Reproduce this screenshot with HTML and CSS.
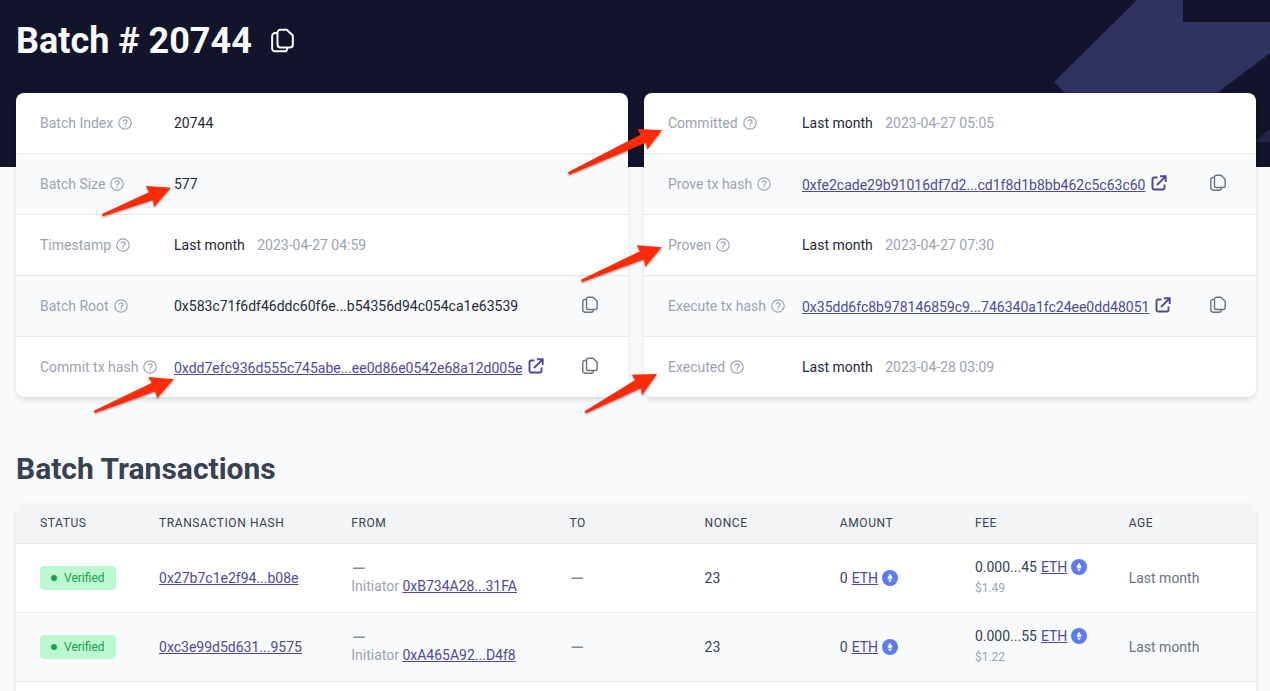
FILE: index.html
```html
<!DOCTYPE html>
<html lang="en">
<head>
<meta charset="utf-8">
<meta name="viewport" content="width=device-width, initial-scale=1">
<title>Batch # 20744</title>
<link rel="stylesheet" href="styles.css">
</head>
<body>
<svg class="sprite" aria-hidden="true">
  <symbol id="help" viewBox="0 0 14 14"><circle cx="7" cy="7" r="6.2" fill="none" stroke="currentColor" stroke-width="1.200"/><path d="M5.1 5.2C5.4 4.200 6.100 3.800 7 3.800c1.200 0 2.100 .7 2.100 1.700C9.100 6.900 7.100 6.900 7.100 8.300" fill="none" stroke="currentColor" stroke-width="1.200" stroke-linecap="round"/><circle cx="7.100" cy="10.200" r=".7" fill="currentColor"/></symbol>
  <symbol id="copy" viewBox="0 0 16 18"><path d="M6.500 1.200h4.500l4.200 4v6.300a2 2 0 0 1-2 2H6.500a2 2 0 0 1-2-2V3.200a2 2 0 0 1 2-2zM4.500 3.500H2.800a2 2 0 0 0-2 2v8.700a2 2 0 0 0 2 2h6.500a2 2 0 0 0 2-2v-.7" fill="none" stroke="currentColor" stroke-width="1.400" stroke-linejoin="round"/></symbol>
  <symbol id="external" viewBox="0 0 16 16"><path d="M6.500 2.500H3a1.500 1.500 0 0 0-1.500 1.500v9A1.500 1.500 0 0 0 3 14.500h9a1.500 1.500 0 0 0 1.500-1.500V9.500M9 1.300h5.700V7M14.400 1.600L6 10" fill="none" stroke="currentColor" stroke-width="1.900"/></symbol>
  <symbol id="eth" viewBox="0 0 16 16"><circle cx="8" cy="8" r="8" fill="#5b7bf3"/><path d="M8 3.500l2.600 4.600L8 9.700 5.400 8.100zM5.600 9.200L8 10.600l2.400-1.400L8 12.500z" fill="#fff"/></symbol>
</svg>

<header class="hero">
  <svg class="hero-art" viewBox="0 0 216 167" aria-hidden="true"><path d="M0 82L83 0h46v22h87v31l-53 40-40 40H51z" fill="#313260"/><path d="M200 142l16-13v13z" fill="#232448"/></svg>
  <h1>Batch # 20744</h1>
  <button class="copy copy-large" type="button" aria-label="Copy batch number"><svg><use href="#copy"/></svg></button>
</header>

<main>
  <section class="details" aria-label="Batch details">
    <table class="card">
      <tbody>
        <tr><th scope="row"><span class="label">Batch Index <svg><use href="#help"/></svg></span></th><td>20744</td><td class="action"></td></tr>
        <tr><th scope="row"><span class="label">Batch Size <svg><use href="#help"/></svg></span><svg class="arrow arrow-size" viewBox="98 182 76 40" aria-hidden="true"><path d="M170.700 187.700L146 186l3 6.300L102 214l1 2.300L152.700 200l1.600 6.700z"/></svg></th><td>577</td><td class="action"></td></tr>
        <tr><th scope="row"><span class="label">Timestamp <svg><use href="#help"/></svg></span></th><td>Last month <time>2023-04-27 04:59</time></td><td class="action"></td></tr>
        <tr><th scope="row"><span class="label">Batch Root <svg><use href="#help"/></svg></span></th><td>0x583c71f6df46ddc60f6e...b54356d94c054ca1e63539</td><td class="action"><button class="copy" type="button" aria-label="Copy batch root"><svg><use href="#copy"/></svg></button></td></tr>
        <tr><th scope="row"><span class="label">Commit tx hash <svg><use href="#help"/></svg></span><svg class="arrow arrow-commit" viewBox="90 373 88 44" aria-hidden="true"><path d="M173.700 379.300L148.300 377l3.700 5.700-58 28 1 2.300 60.300-21.700 2 6.700z"/></svg></th><td><a class="hash" href="#commit"><span>0xdd7efc936d555c745abe...ee0d86e0542e68a12d005e</span><svg><use href="#external"/></svg></a></td><td class="action"><button class="copy" type="button" aria-label="Copy commit hash"><svg><use href="#copy"/></svg></button></td></tr>
      </tbody>
    </table>
    <table class="card">
      <tbody>
        <tr><th scope="row"><span class="label">Committed <svg><use href="#help"/></svg></span><svg class="arrow arrow-committed" viewBox="564 125 102 54" aria-hidden="true"><path d="M662 130.300L637.700 129l2.600 5.700L568 172.300l1.300 2.400L646 142.700l1.300 6.600z"/></svg></th><td>Last month <time>2023-04-27 05:05</time></td><td class="action"></td></tr>
        <tr><th scope="row"><span class="label">Prove tx hash <svg><use href="#help"/></svg></span></th><td><a class="hash" href="#prove"><span>0xfe2cade29b91016df7d2...cd1f8d1b8bb462c5c63c60</span><svg><use href="#external"/></svg></a></td><td class="action"><button class="copy" type="button" aria-label="Copy prove hash"><svg><use href="#copy"/></svg></button></td></tr>
        <tr><th scope="row"><span class="label">Proven <svg><use href="#help"/></svg></span><svg class="arrow arrow-proven" viewBox="577 241 90 46" aria-hidden="true"><path d="M661.700 247.300L637 245.300l3 6-59 28.400 1 2.300 62-22.700 1.300 7.400z"/></svg></th><td>Last month <time>2023-04-27 07:30</time></td><td class="action"></td></tr>
        <tr><th scope="row"><span class="label">Execute tx hash <svg><use href="#help"/></svg></span></th><td><a class="hash" href="#execute"><span>0x35dd6fc8b978146859c9...746340a1fc24ee0dd48051</span><svg><use href="#external"/></svg></a></td><td class="action"><button class="copy" type="button" aria-label="Copy execute hash"><svg><use href="#copy"/></svg></button></td></tr>
        <tr><th scope="row"><span class="label">Executed <svg><use href="#help"/></svg></span><svg class="arrow arrow-executed" viewBox="580 370 82 48" aria-hidden="true"><path d="M657 374l-25 .7 3.300 5.300-50.600 31.300 1.300 2 55-25.300 1 7z"/></svg></th><td>Last month <time>2023-04-28 03:09</time></td><td class="action"></td></tr>
      </tbody>
    </table>
  </section>

  <h2>Batch Transactions</h2>
  <div class="list">
    <table class="transactions">
      <colgroup><col class="c-status"><col class="c-hash"><col class="c-from"><col class="c-num"><col class="c-num"><col class="c-num"><col class="c-fee"><col></colgroup>
      <thead>
        <tr><th scope="col">Status</th><th scope="col">Transaction Hash</th><th scope="col">From</th><th scope="col">To</th><th scope="col">Nonce</th><th scope="col">Amount</th><th scope="col">Fee</th><th scope="col">Age</th></tr>
      </thead>
      <tbody>
        <tr>
          <td><span class="badge">Verified</span></td>
          <td><a href="#tx1">0x27b7c1e2f94...b08e</a></td>
          <td><span class="dash">—</span><div class="initiator">Initiator <a href="#from1">0xB734A28...31FA</a></div></td>
          <td><span class="dash">—</span></td>
          <td>23</td>
          <td><span class="money">0 <a href="#eth">ETH</a><svg><use href="#eth"/></svg></span></td>
          <td><span class="money">0.000...45 <a href="#eth">ETH</a><svg><use href="#eth"/></svg></span><div class="usd">$1.49</div></td>
          <td class="age">Last month</td>
        </tr>
        <tr>
          <td><span class="badge">Verified</span></td>
          <td><a href="#tx2">0xc3e99d5d631...9575</a></td>
          <td><span class="dash">—</span><div class="initiator">Initiator <a href="#from2">0xA465A92...D4f8</a></div></td>
          <td><span class="dash">—</span></td>
          <td>23</td>
          <td><span class="money">0 <a href="#eth">ETH</a><svg><use href="#eth"/></svg></span></td>
          <td><span class="money">0.000...55 <a href="#eth">ETH</a><svg><use href="#eth"/></svg></span><div class="usd">$1.22</div></td>
          <td class="age">Last month</td>
        </tr>
      </tbody>
    </table>
  </div>
</main>
</body>
</html>
```
FILE: styles.css
```css
* { box-sizing: border-box; }
body {
  display: flex;
  flex-direction: column;
  min-height: 100vh;
  margin: 0;
  background: #f9fafb;
  color: #1f2937;
  font: 14px/20px Roboto, "Liberation Sans", sans-serif;
}
.sprite { position: absolute; width: 0; height: 0; }
a { color: #4b4b9c; text-decoration: underline; text-decoration-thickness: 1px; text-underline-offset: 1px; }
table { width: 100%; border-collapse: separate; border-spacing: 0; table-layout: fixed; }
th { font-weight: 400; text-align: left; }

.hero {
  position: relative;
  display: flex;
  align-items: flex-start;
  gap: 19px;
  padding: 21px 16px 106px;
  background: #11142a;
  color: #f9fafb;
}
.hero-art { position: absolute; top: 0; right: 0; width: 216px; height: 167px; }
h1 { margin: 0; font-size: 36px; line-height: 40px; font-weight: 700; }

.copy { display: block; padding: 0 0 2px; border: 0; background: none; color: #6b7280; cursor: pointer; }
.copy svg { display: block; width: 16px; height: 18px; }
.copy-large { margin-top: 7px; color: #f9fafb; }
.copy-large svg { width: 23px; height: 26px; }

main { display: flex; flex: 1; flex-direction: column; margin-top: -74px; padding: 0 14px 0 16px; }
.details { position: relative; display: grid; grid-template-columns: 1fr 1fr; gap: 16px; }
.card {
  border-radius: 8px;
  background: #fff;
  box-shadow: 0 4px 6px -1px rgb(0 0 0 / 10%), 0 2px 4px -1px rgb(0 0 0 / 6%);
}
.card th, .card td { height: 61px; padding: 0; border-bottom: 1px solid #e5e7eb; }
.card tr:nth-child(even) > * { background: #f9fafb; }
.card tr:last-child > * { height: 60px; border-bottom: 0; }
.card th { position: relative; width: 158px; padding-left: 24px; color: #9ca3af; }
.card time { margin-left: 9px; color: #9ca3af; }
.card .action { width: 46px; }
.label { display: flex; align-items: center; gap: 5px; white-space: nowrap; }
.label svg { width: 14px; height: 14px; }
.hash { display: flex; align-items: center; gap: 6px; padding-top: 2px; text-decoration: none; }
.hash span { text-decoration: underline; text-decoration-thickness: 1px; text-underline-offset: 1px; }
.hash svg { width: 16px; height: 16px; margin-bottom: 4px; }

.arrow { position: absolute; z-index: 1; fill: #ff2a06; filter: drop-shadow(0 1px 1px rgb(0 0 0 / 45%)); pointer-events: none; }
.arrow-size { top: 28px; left: 82px; width: 76px; height: 40px; }
.arrow-commit { top: 36px; left: 74px; width: 88px; height: 44px; }
.arrow-committed { top: 32px; left: -80px; width: 102px; height: 54px; }
.arrow-proven { top: 26px; left: -67px; width: 90px; height: 46px; }
.arrow-executed { top: 33px; left: -64px; width: 82px; height: 48px; }

h2 { margin: 52px 0 14px; color: #374151; font-size: 30px; line-height: 40px; font-weight: 700; }
.list {
  flex: 1;
  border-radius: 8px 8px 0 0;
  background: #fff;
  box-shadow: 0 4px 6px -1px rgb(0 0 0 / 10%), 0 2px 4px -1px rgb(0 0 0 / 6%);
}
.c-status { width: 9.6%; }
.c-hash { width: 15.5%; }
.c-from { width: 17.6%; }
.c-num { width: 10.9%; }
.c-fee { width: 12.4%; }
.transactions th {
  height: 41px;
  padding: 0 0 0 24px;
  border-bottom: 1px solid #e5e7eb;
  background: #f3f4f6;
  color: #374151;
  font-size: 12px;
  letter-spacing: 0.05em;
  text-transform: uppercase;
}
.transactions th:first-child { border-top-left-radius: 8px; }
.transactions th:last-child { border-top-right-radius: 8px; }
.transactions td { height: 69px; padding: 0 0 0 24px; border-bottom: 1px solid #e5e7eb; color: #374151; white-space: nowrap; }
.transactions tbody tr:nth-child(even) td { background: #f9fafb; }
.badge {
  display: inline-flex;
  align-items: center;
  gap: 7px;
  height: 24px;
  padding: 0 11px;
  border-radius: 4px;
  background: #bbf7d0;
  color: #16a34a;
  font-size: 12px;
  vertical-align: middle;
}
.badge::before { width: 6px; height: 6px; border-radius: 50%; background: currentColor; content: ""; }
.dash { display: block; padding-left: 1px; color: #848b98; font-size: 17px; font-weight: 500; line-height: 16px; }
.initiator { line-height: 20px; color: #9ca3af; }
.money { display: flex; align-items: center; gap: 4px; }
.money svg { width: 16px; height: 16px; }
.usd { color: #9ca3af; font-size: 12px; line-height: 22px; }
.transactions .age { color: #6b7280; }
```
